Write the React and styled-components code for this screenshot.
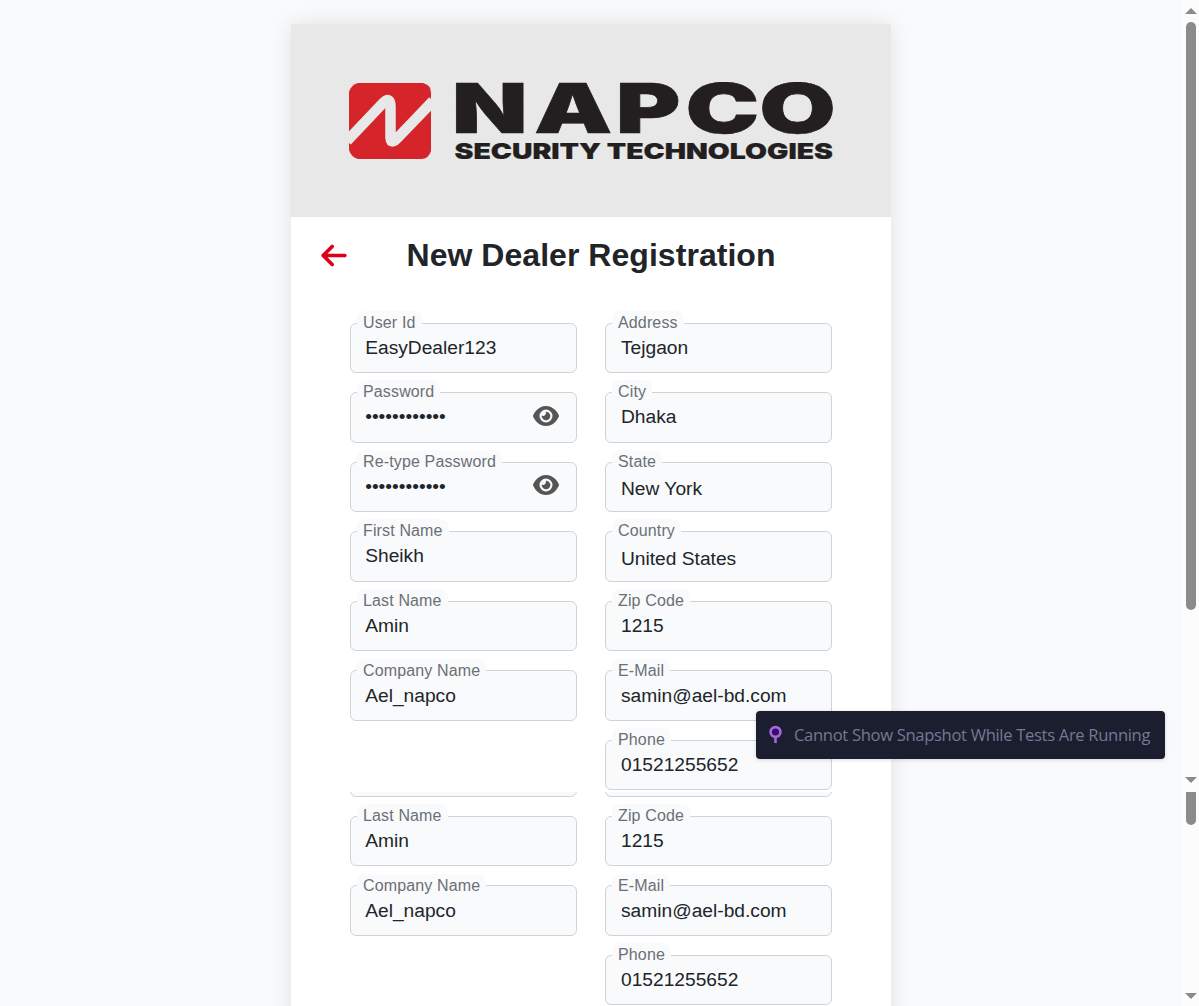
import React from "react";
import styled, { createGlobalStyle } from "styled-components";
import { FaArrowLeft, FaEye } from "react-icons/fa6";

const GlobalStyle = createGlobalStyle`
  * { box-sizing: border-box; }
  body {
    margin: 0;
    background: #f8fafc;
    color: #212529;
    font-family: "Liberation Sans", Arial, sans-serif;
    overflow: hidden;
  }
`;

const Screen = styled.div`
  position: relative;
  width: 1199px;
  height: 1006px;
  overflow: hidden;
`;

const Slice = styled.section`
  display: flex;
  height: ${(p) => p.$height}px;
  overflow: hidden;
`;

const Page = styled.main`
  flex: 1;
  display: flex;
  justify-content: center;
  align-items: flex-start;
  overflow: hidden;
`;

const Card = styled.div`
  width: 600px;
  height: 1100px;
  flex: none;
  margin-top: ${(p) => p.$top}px;
  background: #fff;
  box-shadow: 0 0 20px rgba(0, 0, 0, 0.1);
`;

const Banner = styled.header`
  height: 193px;
  padding: 58px 58px 0;
  background: #e8e8e8;
`;

const Logo = styled.svg`
  display: block;
  width: 485px;
  height: 78px;
`;

const TitleBar = styled.div`
  display: grid;
  grid-template-columns: 56px 1fr 56px;
  align-items: center;
  height: 76px;
  padding: 0 30px;
`;

const BackButton = styled.button`
  display: flex;
  padding: 0;
  border: 0;
  background: none;
  color: #dc0019;

  svg {
    width: 26px;
    height: 29px;
  }
`;

const Title = styled.h1`
  margin: 0;
  font-size: 32px;
  line-height: 38px;
  font-weight: 700;
  letter-spacing: 0.04px;
  text-align: center;
  white-space: nowrap;
`;

const Columns = styled.div`
  display: grid;
  grid-template-columns: 227px 227px;
  column-gap: 28px;
  padding: ${(p) => p.$offset}px 0 0 59px;
`;

const Column = styled.div`
  display: flex;
  flex-direction: column;
  gap: 19px;
`;

const Field = styled.div`
  display: flex;
  flex-direction: column;
  align-items: flex-start;
  height: 50.55px;
  border: 1px solid #ced4da;
  border-radius: 6px;
  background: #f8fafc;
`;

const Label = styled.label`
  flex: none;
  height: 24px;
  margin: -12.7px 0 0 6px;
  padding: 0 6px;
  border-radius: 8px;
  background: #f8fafc;
  color: #6c7074;
  font-size: 16px;
  line-height: 24px;
  letter-spacing: 0.14px;
  white-space: nowrap;
`;

const ValueRow = styled.div`
  display: flex;
  align-items: center;
  justify-content: space-between;
  width: 100%;
  height: 24px;
  margin-top: ${(p) => (p.$select ? 3.15 : 1)}px;
  padding: 0 17px 0 ${(p) => (p.$right ? 15 : 14.2)}px;
  font-size: 19.2px;
  line-height: 24px;
  white-space: nowrap;
`;

const Eye = styled(FaEye)`
  width: 26px;
  height: 24px;
  margin-bottom: 3px;
  color: #555;
`;

const ScrollTrack = styled.aside`
  display: flex;
  flex-direction: column;
  align-items: center;
  width: 17px;
  padding: 8px 0 9px 1px;
  background: #fcfcfc;
  ${(p) => p.$cut && "padding: 0 0 7px 1px;"}
`;

const Thumb = styled.div`
  width: 10px;
  height: ${(p) => p.$height}px;
  margin-top: ${(p) => (p.$cut ? 0 : 8)}px;
  border-radius: ${(p) => (p.$cut ? "0 0 5px 5px" : "5px")};
  background: #8b8b8b;
`;

const Arrow = styled.div`
  width: 12px;
  height: 6px;
  background: #8b8b8b;
  clip-path: ${(p) => (p.$down ? "polygon(0 0, 100% 0, 50% 100%)" : "polygon(50% 0, 100% 100%, 0 100%)")};
  margin-top: ${(p) => (p.$down ? "auto" : 0)};
`;

const Toast = styled.div`
  position: absolute;
  left: 756px;
  top: 711px;
  display: flex;
  align-items: center;
  width: 409px;
  height: 48px;
  padding: 0 0 2px 12px;
  border-radius: 4px;
  background: #1b1e2e;
  box-shadow: 0 1px 4px rgba(0, 0, 0, 0.15);
  color: #747994;
  font-family: "Open Sans", "Noto Sans", sans-serif;
  font-size: 16.6px;
  white-space: nowrap;
`;

const Pin = styled.svg`
  width: 15px;
  height: 20px;
  margin-right: 11px;
`;

const ToastText = styled.span`
  letter-spacing: -0.33px;
`;

const account = [
  { label: "User Id", value: "EasyDealer123" },
  { label: "Password", value: "••••••••••••", secret: true },
  { label: "Re-type Password", value: "••••••••••••", secret: true },
  { label: "First Name", value: "Sheikh" },
  { label: "Last Name", value: "Amin" },
  { label: "Company Name", value: "Ael_napco" },
];

const contact = [
  { label: "Address", value: "Tejgaon" },
  { label: "City", value: "Dhaka" },
  { label: "State", value: "New York", select: true },
  { label: "Country", value: "United States", select: true },
  { label: "Zip Code", value: "1215" },
  { label: "E-Mail", value: "samin@ael-bd.com" },
  { label: "Phone", value: "01521255652" },
];

function FieldColumn({ fields, right }) {
  return (
    <Column>
      {fields.map((f) => (
        <Field key={f.label}>
          <Label>{f.label}</Label>
          <ValueRow $right={right} $select={f.select}>
            <span>{f.value}</span>
            {f.secret && <Eye />}
          </ValueRow>
        </Field>
      ))}
    </Column>
  );
}

function Form({ from = 0, offset }) {
  return (
    <Columns $offset={offset}>
      <FieldColumn fields={account.slice(from)} />
      <FieldColumn fields={contact.slice(from)} right />
    </Columns>
  );
}

function NapcoLogo() {
  return (
    <Logo viewBox="0 0 485 78" aria-label="Napco Security Technologies">
      <path d="M9 1H74Q82 3 82 11V69Q80 76 73 77H9Q2 75 0 68V10Q2 3 9 1Z" fill="#d6242b" />
      <path d="M-2 59L34 21Q41.5 14 41.5 24V56Q42 63 48.5 56L84 19" fill="none" stroke="#e8e8e8" strokeWidth="10.5" strokeLinejoin="round" />
      <g fill="#231f20" stroke="#231f20" fontFamily="Inter, 'Liberation Sans', sans-serif" fontWeight="900">
        <text transform="translate(0 51) scale(1.43 1)" x="71.9 129.4 186.6 235.3 286.9" y="0" fontSize="69" strokeWidth="0.6">NAPCO</text>
        <text x="105.5" y="77" fontSize="22" strokeWidth="0.2" textLength="378.5" lengthAdjust="spacingAndGlyphs">SECURITY TECHNOLOGIES</text>
      </g>
    </Logo>
  );
}

export default function App() {
  return (
    <>
      <GlobalStyle />
      <Screen>
        <Slice $height={792}>
          <Page>
            <Card $top={24}>
              <Banner><NapcoLogo /></Banner>
              <TitleBar>
                <BackButton aria-label="Back"><FaArrowLeft /></BackButton>
                <Title>New Dealer Registration</Title>
              </TitleBar>
              <Form offset={29.53} />
            </Card>
          </Page>
          <ScrollTrack>
            <Arrow />
            <Thumb $height={588} />
            <Arrow $down />
          </ScrollTrack>
        </Slice>
        <Slice $height={214}>
          <Page>
            <Card $top={-80}>
              <Form from={3} offset={34.16} />
            </Card>
          </Page>
          <ScrollTrack $cut>
            <Thumb $height={33} $cut />
            <Arrow $down />
          </ScrollTrack>
        </Slice>
        <Toast>
          <Pin viewBox="0 0 15 20">
            <path d="M7.5 13V19" stroke="#a36ae0" strokeWidth="2.6" />
            <circle cx="7.5" cy="8" r="4.9" fill="#3b0c66" stroke="#a36ae0" strokeWidth="2.6" />
          </Pin>
          <ToastText>Cannot Show Snapshot While Tests Are Running</ToastText>
        </Toast>
      </Screen>
    </>
  );
}
